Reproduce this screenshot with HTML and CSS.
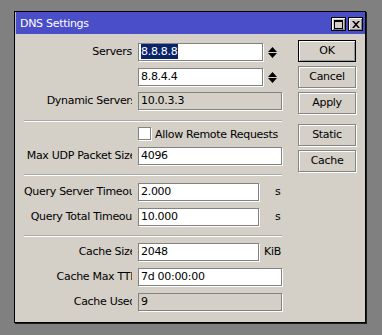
FILE: index.html
```html
<!DOCTYPE html>
<html>
<head>
<meta charset="utf-8">
<link rel="stylesheet" href="styles.css">
</head>
<body>
<div class="window">
  <div class="titlebar">
    <span class="title">DNS Settings</span>
    <div class="tbtns">
      <span class="tbtn"><svg width="9" height="9" viewBox="0 0 9 9"><rect x="0.5" y="0.5" width="8" height="8" fill="none" stroke="#000"/><rect x="0" y="0" width="9" height="2" fill="#000"/></svg></span>
      <span class="tbtn"><svg width="8" height="7" viewBox="0 0 8 7"><path d="M0 0h2l2 2.3 2-2.3h2l-3 3.5 3 3.5h-2l-2-2.3-2 2.3h-2l3-3.5z" fill="#000"/></svg></span>
    </div>
  </div>
  <div class="content">
    <div class="form">
      <div class="row">
        <span class="lbl">Servers</span>
        <div class="field">
          <div class="input w-spin"><span class="sel">8.8.8.8</span></div>
          <svg class="spin" width="9" height="11" viewBox="0 0 9 11"><path d="M0 5L4.5 0 9 5z M0 6h9L4.5 11z" fill="#000"/></svg>
        </div>
      </div>
      <div class="row mt7">
        <span class="lbl"></span>
        <div class="field">
          <div class="input w-spin">8.8.4.4</div>
          <svg class="spin" width="9" height="11" viewBox="0 0 9 11"><path d="M0 5L4.5 0 9 5z M0 6h9L4.5 11z" fill="#000"/></svg>
        </div>
      </div>
      <div class="row mt6">
        <span class="lbl"><span class="lt">Dynamic Servers</span></span>
        <div class="field"><div class="input ro w-full">10.0.3.3</div></div>
      </div>
      <div class="sep mt10"></div>
      <div class="row chkrow mt5">
        <span class="lbl"></span>
        <div class="field"><span class="chk"></span><span class="chktext">Allow Remote Requests</span></div>
      </div>
      <div class="row mt7">
        <span class="lbl"><span class="lt">Max UDP Packet Size</span></span>
        <div class="field"><div class="input w-full">4096</div></div>
      </div>
      <div class="sep mt9"></div>
      <div class="row mt7">
        <span class="lbl"><span class="lt">Query Server Timeout</span></span>
        <div class="field"><div class="input w-short">2.000</div><span class="unit u-s">s</span></div>
      </div>
      <div class="row mt7">
        <span class="lbl"><span class="lt">Query Total Timeout</span></span>
        <div class="field"><div class="input w-short">10.000</div><span class="unit u-s">s</span></div>
      </div>
      <div class="sep mt9"></div>
      <div class="row mt6">
        <span class="lbl"><span class="lt">Cache Size</span></span>
        <div class="field"><div class="input w-short">2048</div><span class="unit u-kib">KiB</span></div>
      </div>
      <div class="row mt7">
        <span class="lbl"><span class="lt">Cache Max TTL</span></span>
        <div class="field"><div class="input w-full">7d 00:00:00</div></div>
      </div>
      <div class="row mt7">
        <span class="lbl"><span class="lt">Cache Used</span></span>
        <div class="field"><div class="input ro w-full">9</div></div>
      </div>
    </div>
    <div class="buttons">
      <span class="btn default">OK</span>
      <span class="btn">Cancel</span>
      <span class="btn">Apply</span>
      <span class="btn gap-top">Static</span>
      <span class="btn">Cache</span>
    </div>
  </div>
</div>
</body>
</html>
```
FILE: styles.css
```css
html, body {
  margin: 0;
  padding: 0;
}
body {
  background: #808080;
  padding: 11px 0 0 14px;
  height: 335px;
  box-sizing: border-box;
  font-family: "DejaVu Sans", sans-serif;
  font-size: 11px;
  letter-spacing: -0.3px;
  color: #000;
}
.window {
  width: 352px;
  height: 312px;
  box-sizing: border-box;
  border: 1px solid #000;
  box-shadow: 1px 1px 0 #1a1a1a;
  background: #d4d0c8;
  display: flex;
  flex-direction: column;
}
.titlebar {
  height: 22px;
  background: #4a4ec8;
  display: flex;
  align-items: flex-start;
  justify-content: space-between;
  border-left: 1px solid #b8b8c8;
}
.title {
  color: #fff;
  line-height: 22px;
  padding-left: 4px;
  padding-top: 1px;
}
.tbtns {
  display: flex;
  gap: 2px;
  margin-top: 5px;
  margin-right: 2px;
}
.tbtn {
  width: 15px;
  height: 14px;
  box-sizing: border-box;
  background: #d4d0c8;
  border: 1px solid #000;
  box-shadow: inset 1px 1px 0 #fff, inset -1px -1px 0 #808080;
  display: flex;
  align-items: center;
  justify-content: center;
}
.content {
  flex: 1;
  display: flex;
  padding: 0 0 0 9px;
}
.form {
  width: 258px;
  padding-top: 9px;
}
.row {
  display: grid;
  grid-template-columns: 108px 144px;
  column-gap: 6px;
  height: 18px;
}
.mt5 { margin-top: 5px; }
.mt6 { margin-top: 6px; }
.mt7 { margin-top: 7px; }
.mt9 { margin-top: 9px; }
.mt10 { margin-top: 10px; }
.lbl {
  display: block;
  text-align: right;
  white-space: nowrap;
  overflow: hidden;
  line-height: 18px;
}
.lt {
  margin-right: -4px;
}
.field {
  display: flex;
  align-items: center;
  height: 18px;
}
.input {
  box-sizing: border-box;
  height: 18px;
  border: 1px solid #828282;
  background: #fff;
  box-shadow: 1px 1px 0 #fff;
  padding: 0 2px;
  line-height: 16px;
  white-space: nowrap;
  overflow: hidden;
}
.input.ro {
  background: #d4d0c8;
}
.w-spin { width: 125px; }
.w-full { width: 144px; }
.w-short { width: 121px; }
.sel {
  background: #0a246a;
  color: #fff;
  padding: 1px 1px 1px 0;
}
.spin {
  margin-left: 5px;
}
.sep {
  height: 2px;
  box-sizing: border-box;
  border-top: 1px solid #a8a8a8;
  border-bottom: 1px solid #fff;
}
.chkrow {
  height: 13px;
}
.chkrow .field {
  height: 13px;
}
.chk {
  width: 13px;
  height: 13px;
  box-sizing: border-box;
  background: #fff;
  border: 1px solid #828282;
  box-shadow: 1px 1px 0 #fff;
}
.chktext {
  margin-left: 4px;
  line-height: 13px;
  padding-top: 1px;
  white-space: nowrap;
}
.unit {
  line-height: 18px;
}
.u-s { margin-left: 16px; }
.u-kib { margin-left: 5px; }
.buttons {
  margin-left: 16px;
  padding-top: 6px;
  display: flex;
  flex-direction: column;
  gap: 4px;
}
.btn {
  width: 58px;
  height: 22px;
  box-sizing: border-box;
  border: 1px solid #858585;
  box-shadow: inset 1px 1px 0 #fff, 1px 1px 0 #fff;
  display: flex;
  align-items: center;
  justify-content: center;
  line-height: 20px;
}
.btn.default {
  border-color: #000;
  box-shadow: inset 1px 1px 0 #fff, inset -1px -1px 0 #9a9a9a;
}
.btn.gap-top {
  margin-top: 6px;
}
```
